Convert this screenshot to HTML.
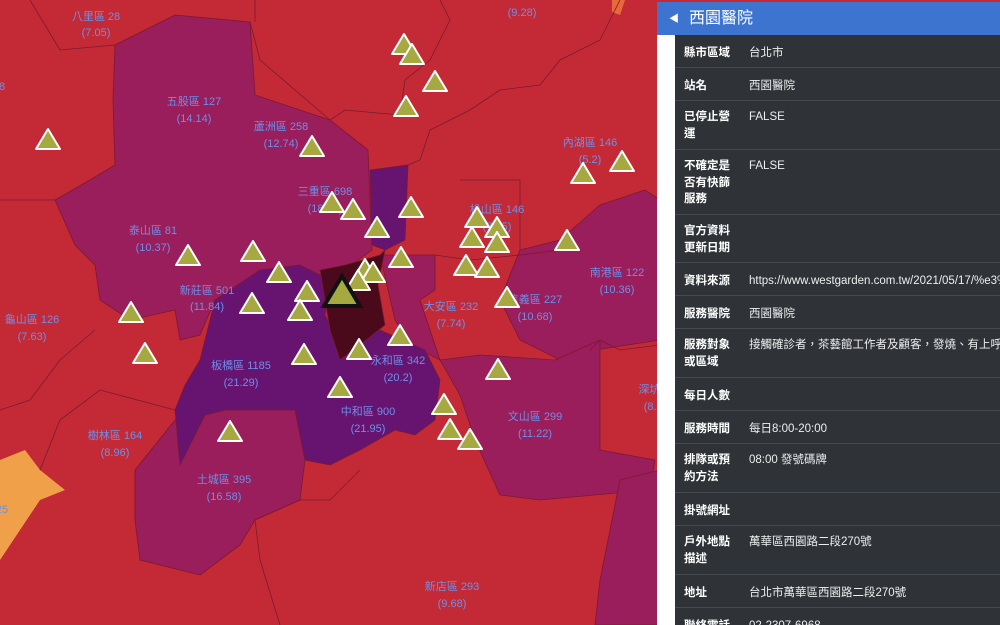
<!DOCTYPE html>
<html><head><meta charset="utf-8"><style>
html,body{margin:0;padding:0;width:1000px;height:625px;overflow:hidden;background:#c42a36;font-family:"Liberation Sans","Noto Sans CJK TC",sans-serif}
#map{position:absolute;left:0;top:0}
#panel{position:absolute;left:657px;top:2px;width:343px;height:623px;background:#fff;overflow:hidden}
#hdr{height:33px;background:#3d74d0;color:#fff;font-size:16px;line-height:33px;padding-left:12px}
#hdr span.a{font-size:10px;margin-right:10px;vertical-align:1px}
#tbl{position:absolute;left:18px;top:33px;right:0;bottom:0;background:#2f3338;color:#fff;font-size:11.5px;overflow:hidden}
.r{border-bottom:1px solid #454a50;display:flex;box-sizing:border-box;padding-top:10px;overflow:hidden}
.l{width:52px;flex:0 0 52px;margin-left:9px;line-height:16.5px;font-weight:bold}
.v{margin-left:13px;white-space:nowrap;line-height:16.5px;color:#eee;flex:0 0 auto}
</style></head><body>
<svg id="map" width="660" height="625" viewBox="0 0 660 625">
<g stroke="#7a1a30" stroke-width="0.8">
<polygon fill="#9a1d5c" points="115,45 175,15 250,22 255,95 330,120 368,150 372,250 330,280 260,280 215,300 200,335 180,340 175,310 130,320 100,300 95,265 75,245 55,200 90,180 115,165 113,100"/>
<polygon fill="#9a1d5c" points="135,470 175,420 205,415 225,410 295,410 305,460 300,500 255,520 240,545 200,575 140,560 135,520"/>
<polygon fill="#9a1d5c" points="520,250 560,240 600,205 645,190 660,200 660,340 595,350 560,360 520,340 500,300"/>
<polygon fill="#9a1d5c" points="440,360 480,355 555,360 600,340 600,450 655,460 650,490 540,500 500,495 475,440 460,395"/>
<polygon fill="#9a1d5c" points="380,255 435,255 435,290 420,300 440,360 410,345 395,320"/>
<polygon fill="#9a1d5c" points="620,480 660,470 660,625 595,625 600,580"/>
<polygon fill="#661470" points="215,300 260,270 300,265 330,280 325,315 340,345 380,330 425,350 440,380 435,420 415,435 395,430 360,450 330,465 305,460 295,410 225,410 205,415 180,465 175,410 185,385 200,360"/>
<polygon fill="#661470" points="370,170 408,165 405,240 385,250 372,245"/>
<polygon fill="#4b0a1c" points="320,270 345,265 380,255 385,250 378,285 385,325 360,345 340,360 330,330"/>
<polygon fill="#f0a048" stroke="none" points="0,460 25,450 40,470 65,490 40,500 20,530 0,560"/>
<polygon fill="#e86a3a" stroke="none" points="612,0 625,0 620,15 612,12"/>
<polyline fill="none" points="30,0 60,50 115,45"/>
<polyline fill="none" points="250,22 260,60 330,120"/>
<polyline fill="none" points="255,0 255,22"/>
<polyline fill="none" points="330,120 345,110 400,115 405,80 430,60 450,20 440,0"/>
<polyline fill="none" points="408,165 420,160 430,130 470,110 500,90 540,85 560,60 600,40 620,0"/>
<polyline fill="none" points="435,255 470,260 520,255 560,250"/>
<polyline fill="none" points="460,180 520,180 520,250"/>
<polyline fill="none" points="0,200 55,200"/>
<polyline fill="none" points="95,330 60,360 30,400 0,410"/>
<polyline fill="none" points="175,410 100,390 60,420 40,470"/>
<polyline fill="none" points="255,520 260,560 280,625"/>
<polyline fill="none" points="590,350 600,340 620,350 660,345"/>
<polyline fill="none" points="255,520 300,500 330,500 360,470"/>
</g>
<g font-size="11" fill="#6f8fe8" text-anchor="middle">
<text x="96" y="20">八里區 28</text><text x="96" y="36">(7.05)</text>
<text x="522" y="16">(9.28)</text>
<text x="194" y="105">五股區 127</text><text x="194" y="122">(14.14)</text>
<text x="281" y="130">蘆洲區 258</text><text x="281" y="147">(12.74)</text>
<text x="325" y="195">三重區 698</text><text x="325" y="212">(18.17)</text>
<text x="153" y="234">泰山區 81</text><text x="153" y="251">(10.37)</text>
<text x="207" y="294">新莊區 501</text><text x="207" y="310">(11.84)</text>
<text x="32" y="323">龜山區 126</text><text x="32" y="340">(7.63)</text>
<text x="241" y="369">板橋區 1185</text><text x="241" y="386">(21.29)</text>
<text x="398" y="364">永和區 342</text><text x="398" y="381">(20.2)</text>
<text x="368" y="415">中和區 900</text><text x="368" y="432">(21.95)</text>
<text x="115" y="439">樹林區 164</text><text x="115" y="456">(8.96)</text>
<text x="224" y="483">土城區 395</text><text x="224" y="500">(16.58)</text>
<text x="451" y="310">大安區 232</text><text x="451" y="327">(7.74)</text>
<text x="535" y="303">信義區 227</text><text x="535" y="320">(10.68)</text>
<text x="617" y="276">南港區 122</text><text x="617" y="293">(10.36)</text>
<text x="590" y="146">內湖區 146</text><text x="590" y="163">(5.2)</text>
<text x="497" y="213">松山區 146</text><text x="497" y="230">(7.45)</text>
<text x="535" y="420">文山區 299</text><text x="535" y="437">(11.22)</text>
<text x="452" y="590">新店區 293</text><text x="452" y="607">(9.68)</text>
<text x="655" y="393">深坑區</text><text x="655" y="410">(8.8)</text>
<text x="2" y="90">8</text><text x="2" y="513">25</text>
</g>
<g fill="#a6a840" stroke="#fff" stroke-width="2" stroke-linejoin="round" id="tri">
</g>
<polygon fill="#a6a840" stroke="#111" stroke-width="4" stroke-linejoin="miter" points="342,276 360,306 324,306"/>
</svg>
<script>
var pts=[[48,140],[404,45],[412,55],[435,82],[406,107],[312,147],[583,174],[622,162],[332,203],[353,210],[411,208],[477,218],[497,228],[497,243],[472,238],[567,241],[377,228],[253,252],[188,256],[279,273],[365,270],[373,273],[358,281],[307,292],[300,311],[252,304],[401,258],[466,266],[487,268],[131,313],[145,354],[304,355],[359,350],[400,336],[507,298],[498,370],[444,405],[450,430],[470,440],[340,388],[230,432]];
var g=document.getElementById('tri'),s='';
pts.forEach(function(p){var x=p[0],y=p[1];s+='<polygon points="'+x+','+(y-11)+' '+(x+12)+','+(y+9)+' '+(x-12)+','+(y+9)+'"/>';});
g.innerHTML=s;
</script>
<div id="panel">
<div id="hdr"><span class="a">◀</span>西園醫院</div>
<div id="tbl">
<div class="r" style="height:33px"><div class="l">縣市區域</div><div class="v">台北市</div></div>
<div class="r" style="height:33px"><div class="l">站名</div><div class="v">西園醫院</div></div>
<div class="r" style="height:49px;padding-top:8px"><div class="l">已停止營運</div><div class="v">FALSE</div></div>
<div class="r" style="height:65px;padding-top:8px"><div class="l">不確定是否有快篩服務</div><div class="v">FALSE</div></div>
<div class="r" style="height:48px;padding-top:8px"><div class="l">官方資料更新日期</div><div class="v"></div></div>
<div class="r" style="height:33px"><div class="l">資料來源</div><div class="v">https://www.westgarden.com.tw/2021/05/17/%e3%</div></div>
<div class="r" style="height:33px"><div class="l">服務醫院</div><div class="v">西園醫院</div></div>
<div class="r" style="height:49px;padding-top:8px"><div class="l">服務對象或區域</div><div class="v">接觸確診者，茶藝館工作者及顧客，發燒、有上呼吸</div></div>
<div class="r" style="height:33px"><div class="l">每日人數</div><div class="v"></div></div>
<div class="r" style="height:33px"><div class="l">服務時間</div><div class="v">每日8:00-20:00</div></div>
<div class="r" style="height:49px;padding-top:8px"><div class="l">排隊或預約方法</div><div class="v">08:00 發號碼牌</div></div>
<div class="r" style="height:33px"><div class="l">掛號網址</div><div class="v"></div></div>
<div class="r" style="height:49px;padding-top:8px"><div class="l">戶外地點描述</div><div class="v">萬華區西園路二段270號</div></div>
<div class="r" style="height:33px"><div class="l">地址</div><div class="v">台北市萬華區西園路二段270號</div></div>
<div class="r" style="height:33px"><div class="l">聯絡電話</div><div class="v">02-2307-6968</div></div>
</div>
</div>
</body></html>
